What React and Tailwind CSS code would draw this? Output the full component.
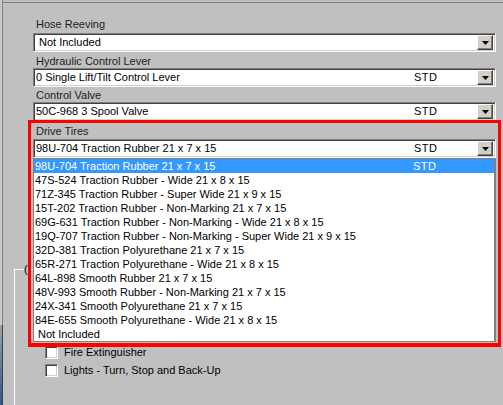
import React from 'react';

const tireOptions = [
  '98U-704 Traction Rubber 21 x 7 x 15',
  '47S-524 Traction Rubber - Wide 21 x 8 x 15',
  '71Z-345 Traction Rubber - Super Wide 21 x 9 x 15',
  '15T-202 Traction Rubber - Non-Marking 21 x 7 x 15',
  '69G-631 Traction Rubber - Non-Marking - Wide 21 x 8 x 15',
  '19Q-707 Traction Rubber - Non-Marking - Super Wide 21 x 9 x 15',
  '32D-381 Traction Polyurethane 21 x 7 x 15',
  '65R-271 Traction Polyurethane - Wide 21 x 8 x 15',
  '64L-898 Smooth Rubber 21 x 7 x 15',
  '48V-993 Smooth Rubber - Non-Marking 21 x 7 x 15',
  '24X-341 Smooth Polyurethane 21 x 7 x 15',
  '84E-655 Smooth Polyurethane - Wide 21 x 8 x 15',
  'Not Included',
];

const DropButton = () => (
  <div className="w-[16px] h-[15px] flex items-center justify-center bg-[#d4d0c8] border border-t-white border-l-white border-b-[#404040] border-r-[#404040] shadow-[inset_-1px_-1px_0_#808080]">
    <svg width="7" height="4" viewBox="0 0 7 4">
      <path d="M0 0h7L3.5 4z" fill="#000" />
    </svg>
  </div>
);

const Combo = ({ value, std, pad = 'pl-[2px]' }) => (
  <div className="h-[19px] flex items-center bg-white border border-t-[#808080] border-l-[#808080] border-b-white border-r-white shadow-[inset_1px_1px_0_#404040,inset_-1px_-1px_0_#d4d0c8] pr-[2px]">
    <span className={`flex-1 ${pad} whitespace-nowrap`}>{value}</span>
    {std && <span className="w-[63px] tracking-[0.5px]">STD</span>}
    <DropButton />
  </div>
);

const Field = ({ label, mt, children }) => (
  <div className={mt}>
    <div className="pl-[3px] h-[13px] text-[#222]">{label}</div>
    {children}
  </div>
);

const CheckRow = ({ label }) => (
  <div className="h-[18px] flex items-center pl-[30px] gap-[6px]">
    <div className="w-[13px] h-[13px] bg-white border border-t-[#808080] border-l-[#808080] border-b-white border-r-white shadow-[inset_1px_1px_0_#404040,inset_-1px_-1px_0_#d4d0c8]" />
    <span>{label}</span>
  </div>
);

export default function App() {
  return (
    <div className="relative w-[503px] h-[405px] overflow-hidden bg-[#c0c0c0] flex font-['Liberation_Sans',Arial,sans-serif] text-[11px] leading-[13px] text-black">
      {/* window edge, desktop shows through at the bottom */}
      <div className="w-[3px] flex flex-col">
        <div className="flex-1 bg-[#c8c8c8] border-r border-[#808080]" />
        <div className="h-[80px] bg-gradient-to-b from-[#9aa4ae] to-[#2d5686] border-r border-[#404040]" />
      </div>

      <div className="flex-1 mt-[2px] border-t border-[#808080] flex flex-col">
        <div className="ml-[30px] w-[463px]">
          <Field label="Hose Reeving" mt="mt-[15px]">
            <div className="mt-[2px]">
              <Combo value="Not Included" pad="pl-[5px]" />
            </div>
          </Field>
          <Field label="Hydraulic Control Lever" mt="mt-[3px]">
            <Combo value="0 Single Lift/Tilt Control Lever" std />
          </Field>
          <Field label="Control Valve" mt="mt-[2px]">
            <Combo value="50C-968 3 Spool Valve" std />
          </Field>
          <Field label="Drive Tires" mt="mt-[4px]">
            <div className="relative mt-[1px]">
              <Combo value="98U-704 Traction Rubber 21 x 7 x 15" std />
              {/* open dropdown list */}
              <div className="absolute z-10 top-[19px] left-0 w-[463px] bg-white border border-[#808080] border-r-2">
                {tireOptions.map((opt, i) => (
                  <div
                    key={opt}
                    className={`h-[14px] flex items-center pl-[1px] whitespace-nowrap ${i === 0 ? 'bg-[#3399ff] text-white' : ''}`}
                  >
                    <span className={`flex-1 ${opt === 'Not Included' ? 'pl-[3px]' : ''}`}>{opt}</span>
                    {i === 0 && <span className="w-[81px] tracking-[0.5px]">STD</span>}
                  </div>
                ))}
              </div>
            </div>
          </Field>
        </div>

        {/* options group box, mostly hidden behind the list */}
        <div className="relative ml-[11px] mr-[20px] mt-[111px] flex-1 border-l border-t border-white">
          <span className="absolute -top-[7px] left-[9px] bg-[#c0c0c0]">(</span>
          <div className="pt-[73px]">
            <CheckRow label="Fire Extinguisher" />
            <CheckRow label="Lights - Turn, Stop and Back-Up" />
          </div>
        </div>
      </div>

      {/* red highlight annotation */}
      <div className="absolute z-20 left-[28px] top-[120px] w-[473px] h-[227px] border-[3px] border-b-4 border-[#ff0000] pointer-events-none" />
    </div>
  );
}
